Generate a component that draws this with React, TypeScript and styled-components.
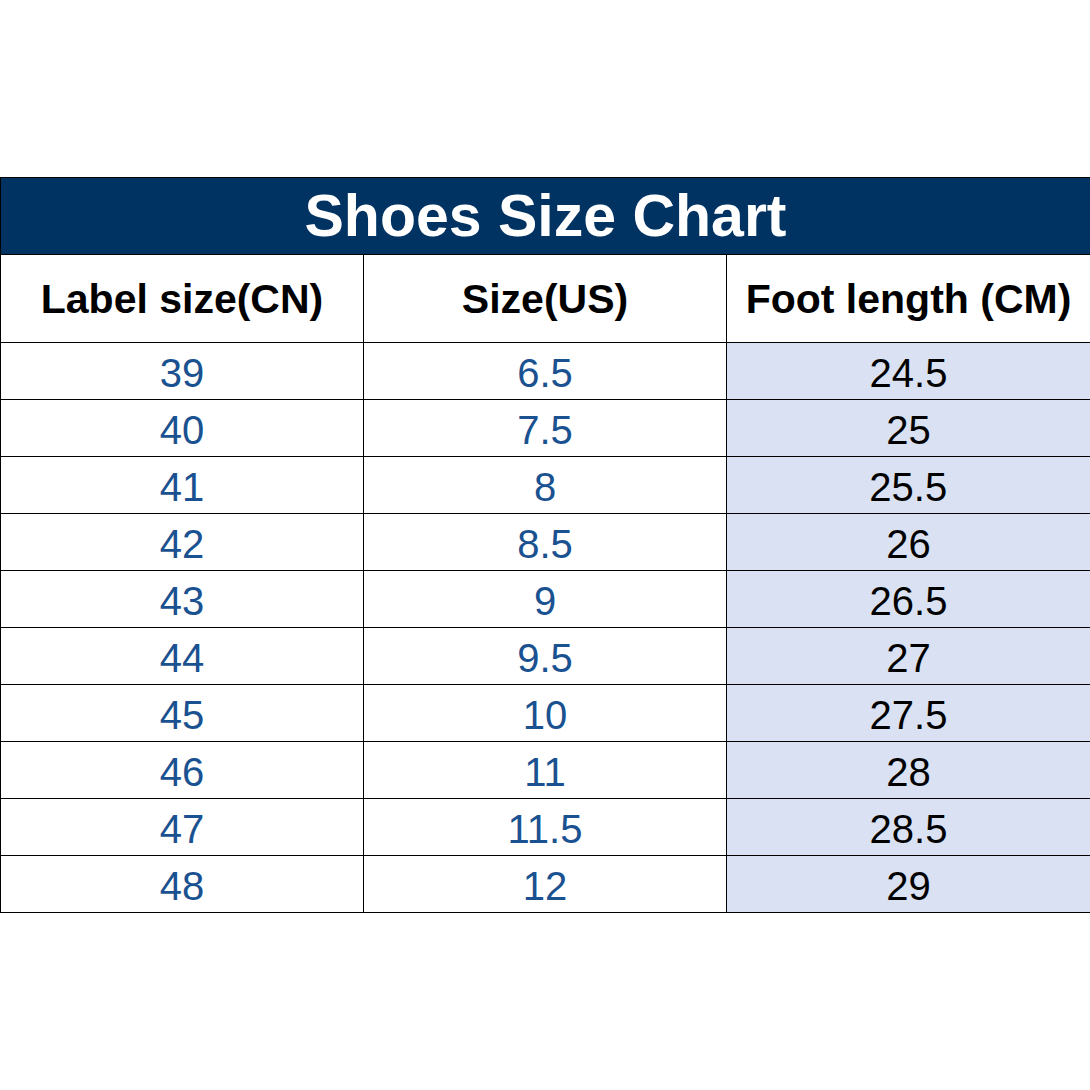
import React from 'react';
import styled, { createGlobalStyle } from 'styled-components';

const GlobalStyle = createGlobalStyle`
  html, body {
    margin: 0;
    padding: 0;
    background: #ffffff;
  }
  body {
    font-family: "Liberation Sans", Arial, sans-serif;
  }
`;

const Page = styled.div`
  width: 1090px;
  height: 1090px;
  padding-top: 177px;
  box-sizing: border-box;
  background: #ffffff;
`;

const Table = styled.table`
  width: 1090px;
  border-collapse: collapse;
  table-layout: fixed;
  font-family: "Liberation Sans", Arial, sans-serif;
`;

const TitleCell = styled.th`
  height: 76px;
  padding: 0;
  background: #003262;
  color: #ffffff;
  font-size: 59px;
  font-weight: 700;
  text-align: center;
  border: 1px solid #000000;
  line-height: 1;
`;

const HeadCell = styled.th`
  height: 85px;
  padding: 2px 0 0;
  color: #000000;
  font-size: 41px;
  font-weight: 700;
  text-align: center;
  border: 1px solid #000000;
  white-space: nowrap;
`;

const Cell = styled.td<{ $shaded?: boolean; $edge?: boolean }>`
  height: 53px;
  padding: 3px 0 0;
  text-align: center;
  font-size: 40px;
  font-weight: 400;
  line-height: 1;
  color: ${(p) => (p.$shaded ? '#000000' : '#1a5190')};
  background: ${(p) => (p.$shaded ? '#d9e1f2' : '#ffffff')};
  border: 1px solid #000000;
  ${(p) => (p.$edge ? 'border-right: 2px solid #4a9b2c;' : '')}
`;

const rows: [string, string, string][] = [
  ['39', '6.5', '24.5'],
  ['40', '7.5', '25'],
  ['41', '8', '25.5'],
  ['42', '8.5', '26'],
  ['43', '9', '26.5'],
  ['44', '9.5', '27'],
  ['45', '10', '27.5'],
  ['46', '11', '28'],
  ['47', '11.5', '28.5'],
  ['48', '12', '29'],
];

const App: React.FC = () => {
  return (
    <Page>
      <GlobalStyle />
      <Table>
        <colgroup>
          <col style={{ width: 363 }} />
          <col style={{ width: 363 }} />
          <col style={{ width: 364 }} />
        </colgroup>
        <thead>
          <tr>
            <TitleCell colSpan={3}>Shoes Size Chart</TitleCell>
          </tr>
          <tr>
            <HeadCell>Label size(CN)</HeadCell>
            <HeadCell>Size(US)</HeadCell>
            <HeadCell>Foot length (CM)</HeadCell>
          </tr>
        </thead>
        <tbody>
          {rows.map(([cn, us, cm]) => (
            <tr key={cn}>
              <Cell>{cn}</Cell>
              <Cell>{us}</Cell>
              <Cell $shaded $edge={cn === '41'}>
                {cm}
              </Cell>
            </tr>
          ))}
        </tbody>
      </Table>
    </Page>
  );
};

export default App;
